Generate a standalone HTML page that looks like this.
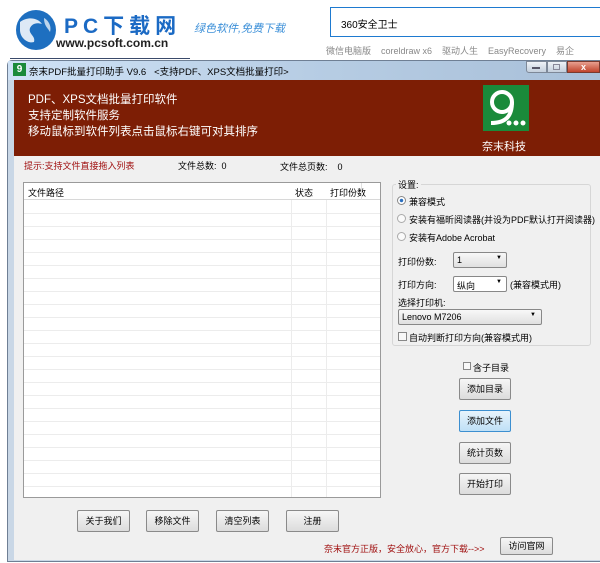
<!DOCTYPE html>
<html><head><meta charset="utf-8"><style>
*{margin:0;padding:0;box-sizing:border-box}
body{width:600px;height:563px;overflow:hidden;background:#fff;font-family:"Liberation Sans","Noto Sans CJK SC",sans-serif;font-size:9px;color:#000;position:relative}
.a{position:absolute}
.btn{position:absolute;background:linear-gradient(#f6f6f6,#dcdcdc);border:1px solid #8a8a8a;border-radius:2px;text-align:center;font-size:9px;line-height:20px;height:22px}
.row{position:absolute;left:0;right:0;height:1px;background:#ececec}
</style></head><body>
<svg class="a" style="left:14px;top:8px" width="44" height="44" viewBox="0 0 44 44"><circle cx="22" cy="22" r="20" fill="#1e6fc0"/><path d="M6 14c8-6 18-4 22 2-6-2-10 0-12 4-2 6 6 8 4 14-6 2-14-4-14-12z" fill="#fff" opacity=".85"/><path d="M30 10c4 2 8 8 6 14-2-4-6-6-6-14z" fill="#fff" opacity=".7"/></svg>
<div class="a" style="left:64px;top:10px;font-size:21px;font-weight:bold;color:#1b6ac4;letter-spacing:5px">PC下载网</div>
<div class="a" style="left:56px;top:36px;font-size:12px;font-weight:bold;color:#222">www.pcsoft.com.cn</div>
<div class="a" style="left:194px;top:20px;font-size:11px;color:#3b8fd8;font-style:italic">绿色软件,免费下载</div>
<div class="a" style="left:10px;top:58px;width:180px;height:1px;background:#3a4a6a"></div>
<div class="a" style="left:330px;top:7px;width:272px;height:30px;border:1px solid #1e7ad0;background:#fff;padding:8px 0 0 10px;font-size:10px">360安全卫士</div>
<div class="a" style="left:326px;top:44px;font-size:9px;color:#888">微信电脑版&nbsp;&nbsp;&nbsp;&nbsp;coreldraw x6&nbsp;&nbsp;&nbsp;&nbsp;驱动人生&nbsp;&nbsp;&nbsp;&nbsp;EasyRecovery&nbsp;&nbsp;&nbsp;&nbsp;易企</div>
<div class="a" style="left:7px;top:60px;width:600px;height:502px;background:#c9d7e6;border:1px solid #6f7f94;border-radius:5px 0 0 0"></div>
<div class="a" style="left:8px;top:61px;width:600px;height:19px;background:linear-gradient(90deg,#cfe2f6,#b7cde4 50%,#a8bfd8)"></div>
<div class="a" style="left:13px;top:63px;width:13px;height:13px;background:#1a8a3a;color:#fff;font-size:10px;font-weight:bold;line-height:13px;text-align:center">9</div>
<div class="a" style="left:29px;top:64px;font-size:9.5px">奈末PDF批量打印助手 V9.6&nbsp;&nbsp;&nbsp;&lt;支持PDF、XPS文档批量打印&gt;</div>
<div class="a" style="left:526px;top:61px;width:21px;height:12px;background:linear-gradient(#eef2f7,#c4cfdc);border:1px solid #7d8898;border-radius:0 0 0 3px"></div>
<div class="a" style="left:532px;top:67px;width:8px;height:2px;background:#556"></div>
<div class="a" style="left:547px;top:61px;width:20px;height:12px;background:linear-gradient(#eef2f7,#c4cfdc);border:1px solid #7d8898"></div>
<div class="a" style="left:553px;top:64px;width:7px;height:6px;border:1px solid #889"></div>
<div class="a" style="left:567px;top:61px;width:33px;height:12px;background:linear-gradient(#e8a090,#c0442c);border:1px solid #7a3a2e;color:#fff;font-size:9px;font-weight:bold;text-align:center;line-height:11px">x</div>
<div class="a" style="left:14px;top:80px;width:586px;height:480px;background:#f0f0f0"></div>
<div class="a" style="left:14px;top:80px;width:586px;height:76px;background:#7d1e05"></div>
<div class="a" style="left:28px;top:92px;color:#fff;font-size:11.5px;line-height:16px">PDF、XPS文档批量打印软件<br>支持定制软件服务<br>移动鼠标到软件列表点击鼠标右键可对其排序</div>
<svg class="a" style="left:483px;top:85px" width="46" height="46" viewBox="0 0 46 46"><rect width="46" height="46" fill="#1a8a3a"/><circle cx="19" cy="17" r="10" fill="none" stroke="#fff" stroke-width="4"/><path d="M29 17 C29 30 24 38 8 38" fill="none" stroke="#fff" stroke-width="4"/><circle cx="26" cy="38" r="2.5" fill="#fff"/><circle cx="33" cy="38" r="2.5" fill="#fff"/><circle cx="40" cy="38" r="2.5" fill="#fff"/></svg>
<div class="a" style="left:482px;top:138px;color:#fff;font-size:11px">奈末科技</div>
<div class="a" style="left:24px;top:159px;color:#a01010;font-size:9px">提示:支持文件直接拖入列表</div>
<div class="a" style="left:178px;top:159px;font-size:9px">文件总数:&nbsp; 0</div>
<div class="a" style="left:280px;top:160px;font-size:9px">文件总页数:&nbsp;&nbsp;&nbsp; 0</div>
<div class="a" style="left:23px;top:182px;width:358px;height:316px;background:#fff;border:1px solid #9a9a9a;overflow:hidden">
<div class="a" style="left:0;top:0;width:356px;height:17px;border-bottom:1px solid #d8d8d8"></div>
<div class="a" style="left:4px;top:3px">文件路径</div>
<div class="a" style="left:271px;top:3px">状态</div>
<div class="a" style="left:306px;top:3px">打印份数</div>
<div class="a" style="left:267px;top:17px;width:1px;height:300px;background:#ececec"></div>
<div class="a" style="left:302px;top:17px;width:1px;height:300px;background:#ececec"></div>
<div class="a" style="left:337px;top:0;width:1px;height:17px;background:#e0e0e0"></div>
<div class="row" style="top:30px"></div><div class="row" style="top:43px"></div><div class="row" style="top:56px"></div><div class="row" style="top:69px"></div><div class="row" style="top:82px"></div><div class="row" style="top:95px"></div><div class="row" style="top:108px"></div><div class="row" style="top:121px"></div><div class="row" style="top:134px"></div><div class="row" style="top:147px"></div><div class="row" style="top:160px"></div><div class="row" style="top:173px"></div><div class="row" style="top:186px"></div><div class="row" style="top:199px"></div><div class="row" style="top:212px"></div><div class="row" style="top:225px"></div><div class="row" style="top:238px"></div><div class="row" style="top:251px"></div><div class="row" style="top:264px"></div><div class="row" style="top:277px"></div><div class="row" style="top:290px"></div><div class="row" style="top:303px"></div>
</div>
<div class="a" style="left:392px;top:184px;width:199px;height:162px;border:1px solid #d6d6d6;border-radius:3px"></div>
<div class="a" style="left:396px;top:178px;background:#f0f0f0;padding:0 2px">设置:</div>
<div class="a" style="left:397px;top:196px;width:9px;height:9px;border-radius:50%;border:1px solid #888;background:radial-gradient(#2a6fc0 30%,#fff 40%)"></div>
<div class="a" style="left:409px;top:195px">兼容模式</div>
<div class="a" style="left:397px;top:214px;width:9px;height:9px;border-radius:50%;border:1px solid #aaa;background:#fafafa"></div>
<div class="a" style="left:409px;top:213px">安装有福昕阅读器(并设为PDF默认打开阅读器)</div>
<div class="a" style="left:397px;top:232px;width:9px;height:9px;border-radius:50%;border:1px solid #aaa;background:#fafafa"></div>
<div class="a" style="left:409px;top:231px">安装有Adobe Acrobat</div>
<div class="a" style="left:398px;top:255px">打印份数:</div>
<div class="a" style="left:453px;top:252px;width:54px;height:16px;border:1px solid #888;border-radius:2px;background:linear-gradient(#f8f8f8,#e0e0e0);padding:2px 3px">1<span style="position:absolute;right:4px;top:2px;font-size:6px">▼</span></div>
<div class="a" style="left:398px;top:278px">打印方向:</div>
<div class="a" style="left:453px;top:276px;width:54px;height:16px;border:1px solid #888;border-radius:2px;background:#fff;padding:2px 3px">纵向<span style="position:absolute;right:4px;top:2px;font-size:6px">▼</span></div>
<div class="a" style="left:510px;top:278px">(兼容模式用)</div>
<div class="a" style="left:398px;top:296px">选择打印机:</div>
<div class="a" style="left:398px;top:309px;width:144px;height:16px;border:1px solid #888;border-radius:2px;background:linear-gradient(#f8f8f8,#e0e0e0);padding:2px 3px">Lenovo M7206<span style="position:absolute;right:5px;top:2px;font-size:6px">▼</span></div>
<div class="a" style="left:398px;top:332px;width:9px;height:9px;border:1px solid #888;background:#f8f8f8"></div>
<div class="a" style="left:409px;top:331px">自动判断打印方向(兼容模式用)</div>
<div class="a" style="left:463px;top:362px;width:8px;height:8px;border:1px solid #888;background:#f8f8f8"></div>
<div class="a" style="left:473px;top:361px">含子目录</div>
<div class="btn" style="left:459px;top:378px;width:52px">添加目录</div>
<div class="btn" style="left:459px;top:410px;width:52px;border-color:#3c8fd0;background:linear-gradient(#e8f4fc,#bfe0f6)">添加文件</div>
<div class="btn" style="left:459px;top:442px;width:52px">统计页数</div>
<div class="btn" style="left:459px;top:473px;width:52px">开始打印</div>
<div class="btn" style="left:77px;top:510px;width:53px">关于我们</div>
<div class="btn" style="left:146px;top:510px;width:53px">移除文件</div>
<div class="btn" style="left:216px;top:510px;width:53px">清空列表</div>
<div class="btn" style="left:286px;top:510px;width:53px">注册</div>
<div class="a" style="left:324px;top:542px;color:#a01010;font-size:9px">奈末官方正版，安全放心，官方下载--&gt;&gt;</div>
<div class="btn" style="left:500px;top:537px;width:53px;height:18px;line-height:16px">访问官网</div>
</body></html>
